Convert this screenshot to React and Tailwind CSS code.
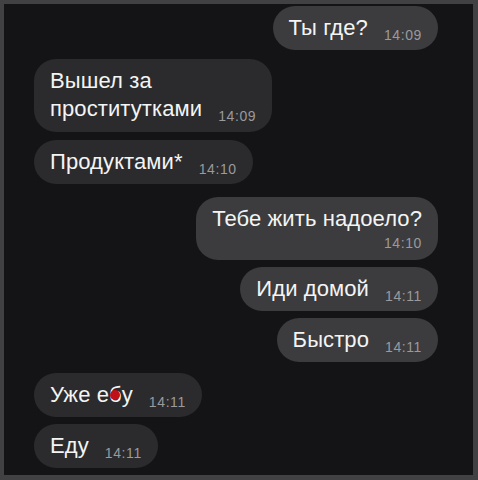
import React from "react";

const font = { fontFamily: "'Liberation Sans', Arial, sans-serif" };

function Time({ children }) {
  return (
    <span className="text-[14px] leading-[14px] tracking-[0.6px] text-[#9a9a9d] ml-[16px] whitespace-nowrap">
      {children}
    </span>
  );
}

function Bubble({ out, children, className = "" }) {
  return (
    <div
      className={`${out ? "self-end bg-[#3c3c3e]" : "self-start bg-[#2b2b2d]"} rounded-[22px] px-4 py-2 text-[22px] leading-[28px] tracking-[0.1px] text-[#f4f4f4] ${className}`}
    >
      {children}
    </div>
  );
}

export default function App() {
  return (
    <div
      className="w-[478px] h-[480px] bg-[#414143] pt-[4px] pl-[4px] pr-[5px] pb-[5px]"
      style={font}
    >
      <div className="w-full h-full bg-[#141416] flex flex-col pl-[30px] pr-[35px] pt-[2px] overflow-hidden">
        <Bubble out className="flex items-end">
          <span>Ты где?</span>
          <Time>14:09</Time>
        </Bubble>
        <Bubble className="flex items-end mt-[9px] pb-[9px]">
          <span>
            Вышел за
            <br />
            проститутками
          </span>
          <Time>14:09</Time>
        </Bubble>
        <Bubble className="flex items-end mt-[8px]">
          <span>Продуктами*</span>
          <Time>14:10</Time>
        </Bubble>
        <Bubble out className="flex flex-col items-end mt-[13px] pb-[7px]">
          <span>Тебе жить надоело?</span>
          <span className="text-[14px] leading-[20px] tracking-[0.6px] text-[#9a9a9d]">14:10</span>
        </Bubble>
        <Bubble out className="flex items-end mt-[7px]">
          <span>Иди домой</span>
          <Time>14:11</Time>
        </Bubble>
        <Bubble out className="flex items-end mt-[7px]">
          <span>Быстро</span>
          <Time>14:11</Time>
        </Bubble>
        <Bubble className="flex items-end mt-[11px]">
          <span>
            Уже е
            <span className="relative inline-block">
              б
              <span className="absolute left-[1px] top-[9px] w-[10px] h-[10px] rounded-full bg-[#c0111a]" />
            </span>
            у
          </span>
          <Time>14:11</Time>
        </Bubble>
        <Bubble className="flex items-end mt-[7px]">
          <span>Еду</span>
          <Time>14:11</Time>
        </Bubble>
      </div>
    </div>
  );
}
